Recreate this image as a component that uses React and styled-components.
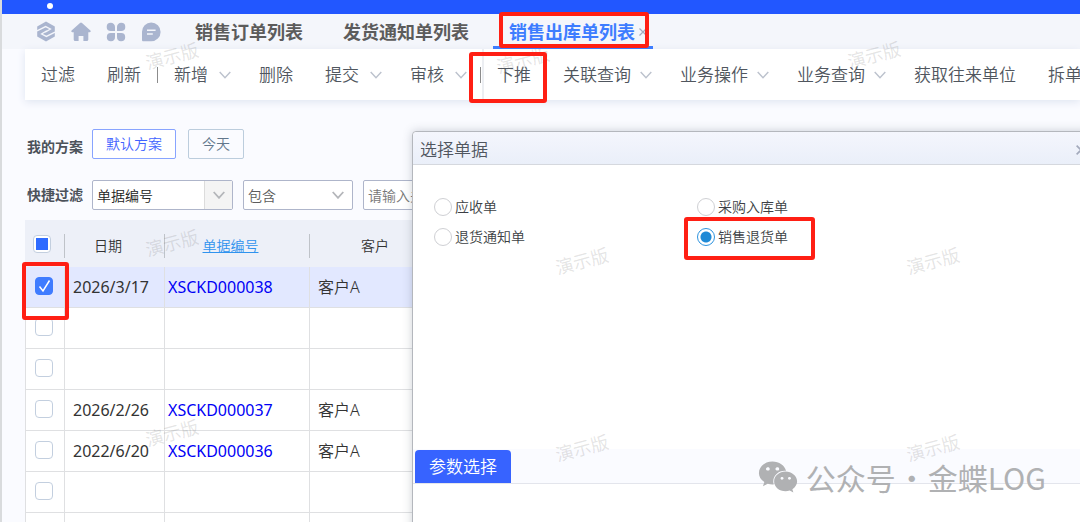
import React from "react";
import styled, { createGlobalStyle, css } from "styled-components";
import { FaWeixin } from "react-icons/fa";

const Global = createGlobalStyle`
  *, *::before, *::after { box-sizing: border-box; }
  body {
    margin: 0;
    background: #fafbff;
    font-family: "Noto Sans", "Noto Sans CJK SC", sans-serif;
    color: #444;
  }
  button, input, select { font-family: inherit; margin: 0; }
`;

const Shell = styled.div`
  position: relative;
  display: flex;
  flex-direction: column;
  height: 100vh;
  overflow: hidden;
  border-left: 2px solid #d9dbdd;
`;

const TopBar = styled.header`
  flex: none;
  display: flex;
  height: 14px;
  padding: 3px 45px;
  background: #2257ff;
`;

const Dot = styled.span`
  width: 6px;
  height: 6px;
  border-radius: 50%;
  background: #fff;
`;

const TabBar = styled.nav`
  flex: none;
  display: flex;
  align-items: stretch;
  height: 35px;
  padding-left: 34px;
  background: #f4f6fb;
`;

const NavIcons = styled.div`
  display: flex;
  align-items: center;
  gap: 15px;
  width: 139px;
`;

const IconButton = styled.button`
  display: flex;
  padding: 0;
  border: 0;
  background: none;
  color: #aab5cf;
`;

const Tab = styled.button`
  position: relative;
  display: flex;
  align-items: center;
  gap: 4px;
  padding: 0 20px;
  border: 0;
  background: none;
  color: #5c5c5c;
  font-size: 18px;
  font-weight: 700;
  line-height: 24px;
  white-space: nowrap;
  ${(p) =>
    p.$active &&
    css`
      z-index: 6;
      margin-left: 4px;
      padding: 3px 6px 0 16px;
      border-bottom: 3px solid #3d7dff;
      background: #f4f6fb;
      color: #3d7dff;
    `}
`;

const Toolbar = styled.div`
  flex: none;
  display: flex;
  align-items: center;
  height: 51px;
  margin-left: 23px;
  padding-left: 16px;
  background: #fff;
  box-shadow: 0 2px 8px #dfe5f1;
`;

const Tool = styled.button`
  flex: none;
  display: flex;
  align-items: center;
  gap: ${(p) => (p.$long ? 9 : 11)}px;
  margin-right: ${(p) => p.$after || 32}px;
  padding: 0;
  border: 0;
  background: none;
  color: #50565e;
  font-size: 17px;
  font-weight: 350;
  line-height: 24px;
  white-space: nowrap;
`;

const ToolArrow = styled.span`
  display: flex;
  color: #bcc2cd;
`;

const Separator = styled.span`
  flex: none;
  width: 1px;
  height: 16px;
  margin-right: ${(p) => (p.$split ? 1 : 16)}px;
  background: #8c8c8c;
`;

const GroupEdge = styled.span`
  flex: none;
  align-self: stretch;
  width: 2px;
  margin-right: 13px;
  background: #eceef2;
`;

const Main = styled.main`
  flex: 1;
  min-height: 0;
  padding: 29px 0 0 23px;
`;

const FilterRow = styled.div`
  display: flex;
  align-items: ${(p) => p.$align || "center"};
  height: 30px;
  margin-bottom: ${(p) => p.$gap}px;
  padding-left: 2px;
`;

const RowLabel = styled.label`
  width: 65px;
  color: #4c525a;
  font-size: 14px;
  font-weight: 700;
  line-height: 24px;
`;

const SchemeButton = styled.button`
  height: 30px;
  margin-right: 12px;
  padding: 0 13px;
  border: 1px solid ${(p) => (p.$active ? "#88a4ff" : "#bccddd")};
  border-radius: 2px;
  background: ${(p) => (p.$active ? "#fff" : "#fafbff")};
  color: ${(p) => (p.$active ? "#4163ff" : "#62778c")};
  font-size: 14px;
  font-weight: 350;
  line-height: 20px;
`;

const SelectBox = styled.div`
  display: flex;
  align-items: stretch;
  position: relative;
  width: ${(p) => p.$width}px;
  height: 30px;
  margin-right: 10px;
  border: 1px solid #aeb5ca;
  border-radius: 2px;
  background: #fff;
`;

const Select = styled.select`
  appearance: none;
  flex: 1;
  min-width: 0;
  padding: 0 4px;
  border: 0;
  background: none;
  color: ${(p) => (p.$dark ? "#222" : "#5c5c5c")};
  font-size: 14px;
  font-weight: 350;
`;

const Arrow = styled.span`
  display: flex;
  align-items: center;
  justify-content: center;
  width: 28px;
  color: #b4b6ba;
  pointer-events: none;
  ${(p) =>
    p.$filled &&
    css`
      border-left: 1px solid #dcdcdc;
      background: #f4f4f4;
    `}
`;

const TextInput = styled.input`
  width: 160px;
  height: 30px;
  padding: 0 4px;
  border: 1px solid #aeb5ca;
  border-radius: 2px;
  background: #fff;
  font-size: 14px;
  font-weight: 350;
  &::placeholder { color: #777; opacity: 1; }
`;

const Table = styled.table`
  width: 100%;
  border-collapse: separate;
  border-spacing: 0;
  table-layout: fixed;
  background: #fff;
  font-size: 16px;
  line-height: 24px;
  color: #333;
`;

const HeadCell = styled.th`
  height: 47px;
  padding: 4px ${(p) => (p.$sortable ? 14 : 0)}px 0 0;
  background: linear-gradient(#bfc3c9, #bfc3c9) right 14px / 1px 24px no-repeat #edf0f8;
  font-size: 14px;
  font-weight: 350;
  text-align: center;
  &:first-child { padding-top: 0; }
`;

const Cell = styled.td`
  height: 41px;
  padding: 0 0 0 8px;
  border-right: 1px solid #dfe0e2;
  border-bottom: 1px solid #dfe0e2;
  background: ${(p) => (p.$selected ? "#e2e8ff" : "#fff")};
  font-weight: ${(p) => (p.$light ? 350 : 400)};
  white-space: nowrap;
  &:first-child { padding: 0 0 3px 9px; border-left: 1px solid #dfe0e2; }
  &:nth-child(3) { padding-left: 3px; }
`;

const SortLink = styled.a`
  color: #2f93ee;
  text-decoration: underline;
`;

const CodeLink = styled.a`
  color: #0000f5;
  text-decoration: none;
`;

const Check = styled.input.attrs({ type: "checkbox" })`
  appearance: none;
  display: block;
  width: 18px;
  height: 18px;
  border: 1px solid #c3cfdf;
  border-radius: 4px;
  background: #fff;
  &:checked {
    border-color: #3f7cff;
    background: #3f7cff
      url("data:image/svg+xml,%3Csvg xmlns='http://www.w3.org/2000/svg' viewBox='0 0 16 16'%3E%3Cpath d='M3.5 8.5 7 13 13.5 2.5' fill='none' stroke='white' stroke-width='1.5'/%3E%3C/svg%3E")
      center / 16px no-repeat;
  }
`;

const CheckAll = styled(Check)`
  margin-left: 8px;
  background: linear-gradient(#2f6bff, #2f6bff) center / 12px 12px no-repeat #fff;
`;

const Dialog = styled.section`
  position: absolute;
  z-index: 2;
  top: 131px;
  left: 410px;
  right: -10px;
  bottom: -10px;
  border: 1px solid #b4b7bd;
  border-radius: 4px 4px 0 0;
  background: #fff;
  box-shadow: 0 0 10px rgba(60, 70, 90, 0.25);
`;

const DialogHead = styled.header`
  display: flex;
  align-items: center;
  justify-content: space-between;
  height: 33px;
  padding: 3px 3px 0 7px;
  border-bottom: 1px solid #d5d8de;
  border-radius: 4px 4px 0 0;
  background: linear-gradient(#f4f6fd, #eaeff9);
`;

const DialogTitle = styled.h2`
  margin: 0;
  color: #50565f;
  font-size: 17px;
  font-weight: 350;
  line-height: 24px;
`;

const Options = styled.fieldset`
  display: grid;
  grid-template-columns: 263px 1fr;
  grid-auto-rows: 30px;
  align-content: start;
  height: 284px;
  margin: 0;
  padding: 27px 0 0 21px;
  border: 0;
`;

const Option = styled.label`
  display: flex;
  align-items: center;
  gap: 3px;
  color: #3c3f44;
  font-size: 14px;
  font-weight: 350;
  line-height: 20px;
`;

const Radio = styled.input.attrs({ type: "radio" })`
  appearance: none;
  width: 18px;
  height: 18px;
  border: 1px solid #cfd0d4;
  border-radius: 50%;
  background: #fff;
  &:checked {
    border-color: #2d93de;
    background: radial-gradient(circle, #1f8ad6 5px, #fff 6px);
  }
`;

const ParamTabs = styled.div`
  display: flex;
  align-items: flex-end;
  height: 35px;
  padding-left: 2px;
  border-bottom: 1px solid #e3e5ec;
  background: #fafbff;
`;

const ParamTab = styled.button`
  height: 33px;
  padding: 0 14px;
  border: 0;
  border-radius: 4px 4px 0 0;
  background: #3763ff;
  color: #fff;
  font-size: 17px;
  font-weight: 350;
  line-height: 24px;
`;

const Overlay = styled.div`
  position: absolute;
  inset: 0;
  z-index: 5;
  pointer-events: none;
`;

const Stamp = styled.span`
  position: absolute;
  left: ${(p) => p.$x}px;
  top: ${(p) => p.$y}px;
  transform: translate(-50%, -50%) rotate(-15deg);
  color: rgba(90, 90, 90, 0.17);
  font-size: 18px;
  line-height: 24px;
  white-space: nowrap;
`;

const Mark = styled.span`
  position: absolute;
  z-index: 7;
  left: ${(p) => p.$x}px;
  top: ${(p) => p.$y}px;
  width: ${(p) => p.$w}px;
  height: ${(p) => p.$h}px;
  border: 4px solid #ff1f14;
  border-radius: 3px;
  pointer-events: none;
`;

const Account = styled.div`
  position: absolute;
  z-index: 8;
  right: 34px;
  bottom: 23px;
  display: flex;
  align-items: center;
  gap: 1px;
  color: #b0b1b3;
  font-family: "Noto Sans CJK SC", sans-serif;
  font-size: 30px;
  font-weight: 400;
  line-height: 44px;
  white-space: nowrap;
`;

const AccountIcon = styled(FaWeixin)`
  width: 40px;
  height: 40px;
  margin-right: 7px;
`;

const Chevron = ({ weight = 1.4 }) => (
  <svg width="12" height="8" viewBox="0 0 12 8" fill="none" stroke="currentColor" strokeWidth={weight}>
    <path d="M0.7 1 6 6.8 11.3 1" />
  </svg>
);

const CloseIcon = ({ size = 8 }) => (
  <svg width={size} height={size} viewBox="0 0 8 8" fill="none" stroke="#a3aabc" strokeWidth="1.3">
    <path d="M0.5 0.5 7.5 7.5M7.5 0.5 0.5 7.5" />
  </svg>
);

const LogoIcon = () => (
  <svg width="20" height="21" viewBox="0 0 20 21">
    <path d="M10 0.4 18.8 5.4V15.6L10 20.6 1.2 15.6V5.4Z" fill="currentColor" />
    <path
      d="M1 9.8 9.6 5.6 14.4 8 9.2 11.2M19 11.2 10.4 15.4 5.6 13 10.8 9.8"
      fill="none"
      stroke="#f4f6fb"
      strokeWidth="1.3"
    />
  </svg>
);

const HomeIcon = () => (
  <svg width="20" height="20" viewBox="0 0 20 20" fill="currentColor">
    <path d="M9 0.9a1.5 1.5 0 0 1 2 0l8.4 7.6c.7.7.4 1.7-.6 1.7H17.3v7.4c0 .9-.6 1.5-1.5 1.5H12.4v-5.2H7.6v5.2H4.2c-.9 0-1.5-.6-1.5-1.5v-7.4H1.2c-1 0-1.3-1-.6-1.7Z" />
  </svg>
);

const AppsIcon = () => (
  <svg width="20" height="20" viewBox="0 0 20 20" fill="currentColor">
    <path d="M4.8.8A4.2 4.2 0 0 1 9 5v4H4.8a4.1 4.1 0 0 1 0-8.2ZM15.2.8a4.1 4.1 0 0 1 0 8.2H11V5A4.2 4.2 0 0 1 15.2.8ZM4.8 11H9v4a4.1 4.1 0 1 1-4.2-4ZM11 11h4.2a4.1 4.1 0 1 1-4.2 4Z" />
  </svg>
);

const ChatIcon = () => (
  <svg width="20" height="20" viewBox="0 0 20 20">
    <path d="M10.2.5a9.3 9.3 0 0 1 0 18.8H2.4c-.9 0-1.4-.5-1.4-1.4V9.8A9.2 9.2 0 0 1 10.2.5Z" fill="currentColor" />
    <path d="M6 8.3h8.6M6 12h5.8" stroke="#f4f6fb" strokeWidth="1.6" />
  </svg>
);

const tools = [
  { text: "过滤" },
  { text: "刷新", after: 16, sep: true },
  { text: "新增", menu: true, after: 28 },
  { text: "删除" },
  { text: "提交", menu: true, after: 28 },
  { text: "审核", menu: true, after: 13, sep: true, split: true },
  { text: "下推" },
  { text: "关联查询", menu: true, after: 28 },
  { text: "业务操作", menu: true, after: 28 },
  { text: "业务查询", menu: true, after: 28 },
  { text: "获取往来单位" },
  { text: "拆单" },
];

const rows = [
  { date: "2026/3/17", code: "XSCKD000038", customer: "客户A", selected: true },
  {},
  {},
  { date: "2026/2/26", code: "XSCKD000037", customer: "客户A" },
  { date: "2022/6/20", code: "XSCKD000036", customer: "客户A" },
  {},
  {},
];

const options = ["应收单", "采购入库单", "退货通知单", "销售退货单"];

const stamps = [
  [170, 56], [521, 60], [872, 55],
  [170, 243], [580, 261], [931, 261],
  [170, 433], [580, 448], [931, 448],
];

export default function App() {
  return (
    <Shell>
      <Global />
      <TopBar><Dot /></TopBar>
      <TabBar>
        <NavIcons>
          <IconButton aria-label="工作台"><LogoIcon /></IconButton>
          <IconButton aria-label="首页"><HomeIcon /></IconButton>
          <IconButton aria-label="应用"><AppsIcon /></IconButton>
          <IconButton aria-label="消息"><ChatIcon /></IconButton>
        </NavIcons>
        <Tab>销售订单列表</Tab>
        <Tab>发货通知单列表</Tab>
        <Tab $active>销售出库单列表<CloseIcon /></Tab>
      </TabBar>
      <Toolbar>
        {tools.map((t) => (
          <React.Fragment key={t.text}>
            <Tool $after={t.after} $long={t.text.length > 2}>
              {t.text}
              {t.menu && <ToolArrow><Chevron /></ToolArrow>}
            </Tool>
            {t.sep && <Separator $split={t.split} />}
            {t.split && <GroupEdge />}
          </React.Fragment>
        ))}
      </Toolbar>
      <Main>
        <FilterRow $gap={21} $align="flex-end">
          <RowLabel as="span">我的方案</RowLabel>
          <SchemeButton $active>默认方案</SchemeButton>
          <SchemeButton>今天</SchemeButton>
        </FilterRow>
        <FilterRow $gap={10}>
          <RowLabel htmlFor="field">快捷过滤</RowLabel>
          <SelectBox $width={141}>
            <Select id="field" $dark><option>单据编号</option></Select>
            <Arrow $filled><Chevron weight={1.8} /></Arrow>
          </SelectBox>
          <SelectBox $width={110}>
            <Select aria-label="条件"><option>包含</option></Select>
            <Arrow><Chevron weight={1.8} /></Arrow>
          </SelectBox>
          <TextInput aria-label="关键字" placeholder="请输入关键字" />
        </FilterRow>
        <Table>
          <colgroup>
            <col style={{ width: 40 }} />
            <col style={{ width: 100 }} />
            <col style={{ width: 145 }} />
            <col style={{ width: 130 }} />
            <col />
          </colgroup>
          <thead>
            <tr>
              <HeadCell><CheckAll aria-label="全选" /></HeadCell>
              <HeadCell $sortable>日期</HeadCell>
              <HeadCell $sortable><SortLink href="#code">单据编号</SortLink></HeadCell>
              <HeadCell>客户</HeadCell>
              <HeadCell />
            </tr>
          </thead>
          <tbody>
            {rows.map((r, i) => (
              <tr key={i}>
                <Cell $selected={r.selected}>
                  <Check aria-label={`第${i + 1}行`} defaultChecked={r.selected} />
                </Cell>
                <Cell $selected={r.selected}>{r.date}</Cell>
                <Cell $selected={r.selected}>
                  {r.code && <CodeLink href={`#${r.code}`}>{r.code}</CodeLink>}
                </Cell>
                <Cell $selected={r.selected} $light>{r.customer}</Cell>
                <Cell $selected={r.selected} />
              </tr>
            ))}
          </tbody>
        </Table>
      </Main>
      <Dialog role="dialog" aria-label="选择单据">
        <DialogHead>
          <DialogTitle>选择单据</DialogTitle>
          <IconButton aria-label="关闭"><CloseIcon size={10} /></IconButton>
        </DialogHead>
        <Options>
          {options.map((o) => (
            <Option key={o}>
              <Radio name="bill" defaultChecked={o === "销售退货单"} />
              {o}
            </Option>
          ))}
        </Options>
        <ParamTabs><ParamTab>参数选择</ParamTab></ParamTabs>
      </Dialog>
      <Overlay>
        {stamps.map(([x, y]) => (
          <Stamp key={`${x}-${y}`} $x={x} $y={y}>演示版</Stamp>
        ))}
      </Overlay>
      <Mark $x={497} $y={12} $w={150} $h={36} />
      <Mark $x={467} $y={52} $w={78} $h={51} />
      <Mark $x={20} $y={262} $w={47} $h={58} />
      <Mark $x={682} $y={217} $w={131} $h={43} />
      <Account>
        <AccountIcon />
        <span>公众号</span>
        <span>·</span>
        <span>金蝶LOG</span>
      </Account>
    </Shell>
  );
}
